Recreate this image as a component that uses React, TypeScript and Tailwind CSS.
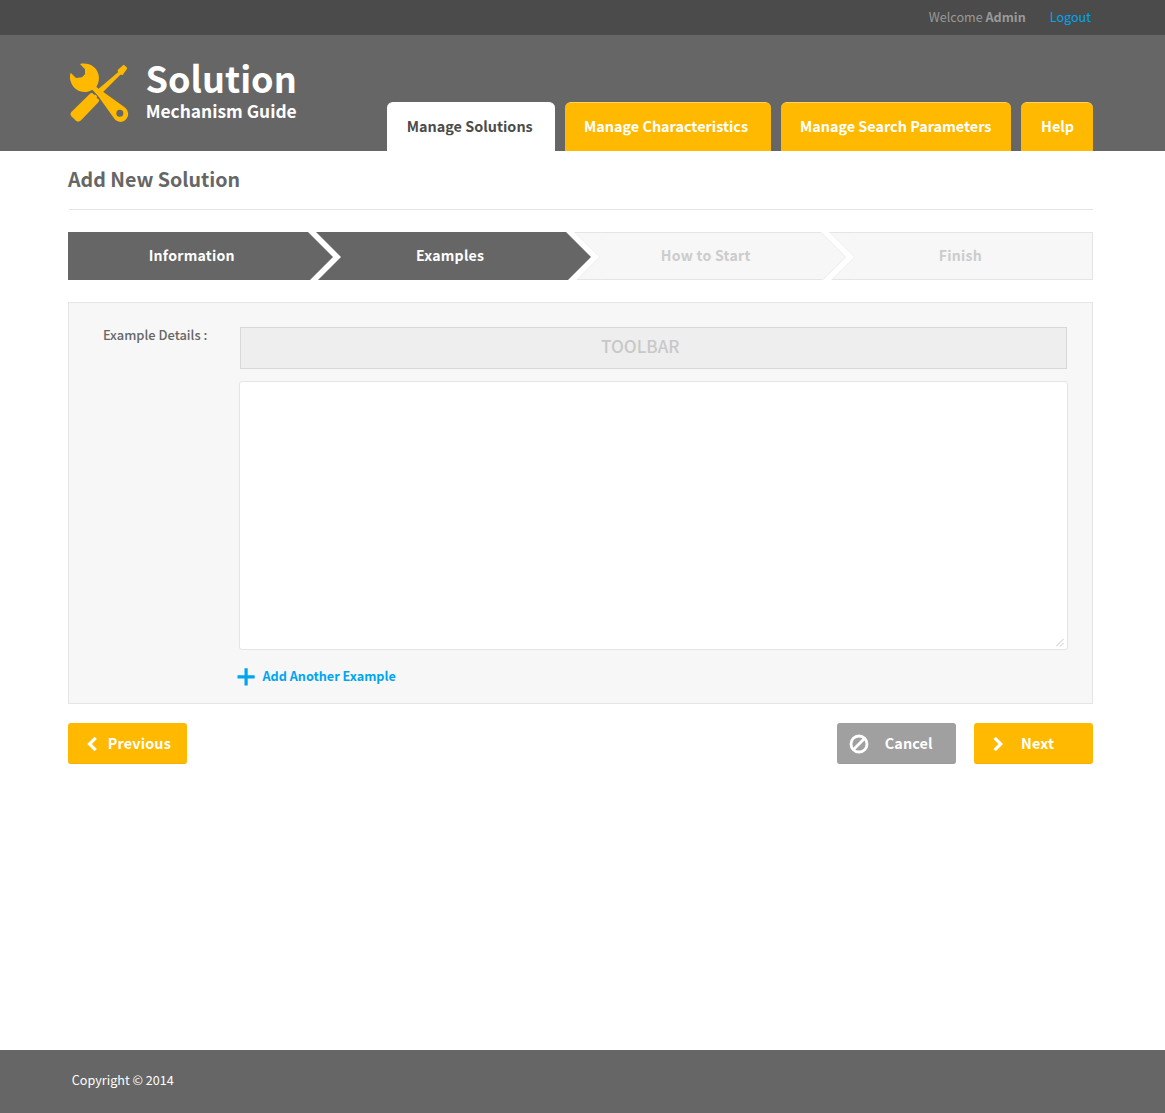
import React from "react";

function LogoMark() {
  return (
    <svg viewBox="30 24 177 180" className="block h-[60px] w-[59px] shrink-0" fill="#ffb900" aria-hidden="true">
      {/* screwdriver handle */}
      <path d="M90 116 Q94 112 98 115 L102 119 L107 119 L111 124 L110 129 L116 133 Q119 137 115 142 L64 195 Q56 203 48 197 L34 184 Q29 178 34 171 Z" />
      {/* screwdriver shaft and tip */}
      <path d="M108 108 L174 52 L173 45 L190 30 Q193 29 195 32 L201 38 Q202 41 200 43 L188 60 L181 59 L118 122 Z" />
      {/* wrench with ring end */}
      <path
        fillRule="evenodd"
        d="M60 27 C86 21 111 35 116 61 C118 73 116 84 109 95 L119 104 Q122 107 127 109 L194 157 C206 166 208 183 198 193 C187 205 169 202 162 190 L117 127 Q113 121 104 112 L97 104 C72 119 42 108 33 82 C29 72 29 62 32 53 L48 69 L66 67 L75 58 L75 43 Z M190 175 A10.500 10.500 0 1 0 169 175 A10.500 10.500 0 1 0 190 175 Z"
      />
    </svg>
  );
}

type Tone = "dark" | "light";

/* Arrow-shaped divider between two wizard steps */
function Divider({ from, to }: { from: Tone; to: Tone }) {
  return (
    <svg viewBox="0 0 34 48" className="relative block h-12 w-[34px] shrink-0 overflow-visible" aria-hidden="true">
      {to === "dark" ? (
        <path d="M8 0 H34 V48 H10 L33 25 Z" fill="#666666" />
      ) : (
        <>
          <path d="M8.500 0.500 H34.500 V47.500 H11 L34 25 Z" fill="#f7f7f7" />
          <path d="M8.500 0.500 L33.600 25 L11 47.500" fill="none" stroke="#ececec" />
          <path d="M8 0.500 H34 M10.500 47.500 H34" fill="none" stroke="#e5e5e5" />
          {/* keeps the gap's point white where it meets the next step */}
          <path d="M4.500 0 L29.300 25 L6.500 48" fill="none" stroke="#ffffff" strokeWidth="5" />
        </>
      )}
      {from === "dark" ? (
        <path d="M0 0 L25 25 L2 48 H0 Z" fill="#666666" />
      ) : (
        <>
          <path d="M0 0.500 L25 25 L2.500 47.500 H0 Z" fill="#f7f7f7" />
          <path d="M0 0.500 L24.600 25 L2 47.500 H0" fill="none" stroke="#ececec" />
        </>
      )}
    </svg>
  );
}

function Tab({ label, className }: { label: string; className: string }) {
  return (
    <a
      className={
        "block h-[49px] rounded-t-[6px] border-t pt-[11px] text-[14.400px] leading-6 font-bold whitespace-nowrap " +
        className
      }
    >
      {label}
    </a>
  );
}

export default function App() {
  return (
    <div className="flex h-[1113px] w-[1165px] flex-col bg-white font-['Noto_Sans_CJK_SC',sans-serif] text-[#666666]">
      <div className="flex h-[35px] shrink-0 justify-end bg-[#4b4b4b] pr-[74px] text-[12.600px] leading-[34px] text-[#999999]">
        <span>
          Welcome <b className="font-bold">Admin</b>
        </span>
        <a className="ml-6 text-[#00a5f0]">Logout</a>
      </div>

      <header className="flex h-[116px] shrink-0 justify-between bg-[#666666] pr-[72px] pl-[70px]">
        <div className="flex pt-7">
          <LogoMark />
          <div className="ml-4 font-bold whitespace-nowrap text-white">
            <div className="pl-[0.500px] text-[36.100px] leading-[28px]">Solution</div>
            <div className="mt-2 pl-[0.700px] text-[17.350px] leading-6">Mechanism Guide</div>
          </div>
        </div>
        <nav className="flex items-end gap-2.5">
          <Tab label="Manage Solutions" className="w-[168px] border-white bg-white pl-[19.800px] text-[#4b4b4b]" />
          <Tab label="Manage Characteristics" className="w-[206px] border-[#ffd35c] bg-[#ffb900] pl-[19px] text-white" />
          <Tab label="Manage Search Parameters" className="w-[230px] border-[#ffd35c] bg-[#ffb900] pl-[18.900px] text-white" />
          <Tab label="Help" className="w-[72px] border-[#ffd35c] bg-[#ffb900] pl-[20px] text-white" />
        </nav>
      </header>

      <main className="flex-1 pr-[72px] pl-[68px]">
        <h1 className="ml-px h-[59px] border-b border-[#e5e5e5] pt-[12px] text-[19.650px] leading-8 font-bold">
          <span className="-ml-px">Add New Solution</span>
        </h1>

        <div className="mt-[22px] flex h-12 text-[14.100px] leading-[46px] font-bold tracking-[0.250px] whitespace-nowrap">
          <div className="w-60 bg-[#666666] pl-[80.700px] text-white">Information</div>
          <Divider from="dark" to="dark" />
          <div className="w-56 bg-[#666666] pl-[73.900px] text-white">Examples</div>
          <Divider from="dark" to="light" />
          <div className="w-[221px] border-y border-[#e5e5e5] bg-[#f7f7f7] pl-[60.800px] leading-[44px] text-[#cccccc]">
            How to Start
          </div>
          <Divider from="light" to="light" />
          <div className="flex-1 border-y border-r border-[#e5e5e5] bg-[#f7f7f7] pl-[83.700px] leading-[44px] text-[#cccccc]">
            Finish
          </div>
        </div>

        <section className="mt-[22px] flex h-[402px] border border-[#e5e5e5] bg-[#f7f7f7]">
          <label className="w-[170px] shrink-0 pt-5 pl-[33.900px] text-[12.900px] leading-6 font-medium">
            Example Details :
          </label>
          <div className="flex w-[829px] flex-col pt-6">
            <div className="mx-px h-[42px] border border-[#d8d8d8] bg-[#eeeeee] pl-[360px] text-[17.100px] leading-[36px] font-medium text-[#c8c8c8]">
              TOOLBAR
            </div>
            <div className="mt-3 flex h-[269px] items-end justify-end rounded-[3px] border border-[#e5e5e5] bg-white pr-[3px] pb-[2px]">
              <svg viewBox="0 0 8 8" className="h-2 w-2" fill="none" stroke="#b5b5b5" strokeWidth="0.800" aria-hidden="true">
                <path d="M0 7.500 L7.500 0 M4 7.500 L7.500 4" />
              </svg>
            </div>
            <a className="mt-[14px] -ml-[2px] flex items-center text-[12.640px] leading-6 font-bold text-[#00a5f0]">
              <svg viewBox="0 0 18 18" className="mt-px h-[18px] w-[18px]" fill="#00a5f0" aria-hidden="true">
                <path d="M7.500 0.300 H10.700 V7.300 H17.700 V10.500 H10.700 V17.500 H7.500 V10.500 H0.500 V7.300 H7.500 Z" />
              </svg>
              <span className="ml-[7.500px]">Add Another Example</span>
            </a>
          </div>
        </section>

        <div className="mt-[19px] flex h-[41px] text-[14.400px] leading-10 font-bold tracking-[0.150px] text-white">
          <button className="flex w-[119px] items-center rounded-[3px] border-b border-[#f5ad00] bg-[#ffb900] pl-[19px]">
            <svg viewBox="0 0 10 14" className="mt-px h-3.5 w-2.5" fill="none" stroke="white" strokeWidth="3.200" aria-hidden="true">
              <path d="M8.700 0.900 L2.500 7 L8.700 13.100" />
            </svg>
            <span className="ml-[10.800px]">Previous</span>
          </button>
          <button className="ml-auto flex w-[119px] items-center rounded-[3px] border-b border-[#999999] bg-[#a0a0a0] pl-3">
            <svg viewBox="0 0 20 20" className="mt-px h-5 w-5" fill="none" stroke="white" strokeWidth="2.800" aria-hidden="true">
              <circle cx="10" cy="10" r="8" />
              <path d="M4.500 15.500 L15.500 4.500" />
            </svg>
            <span className="ml-[15.700px]">Cancel</span>
          </button>
          <button className="ml-[18px] flex w-[119px] items-center rounded-[3px] border-b border-[#f5ad00] bg-[#ffb900] pl-[19px]">
            <svg viewBox="0 0 10 14" className="mt-px h-3.5 w-2.5" fill="none" stroke="white" strokeWidth="3.200" aria-hidden="true">
              <path d="M1.600 0.900 L7.800 7 L1.600 13.100" />
            </svg>
            <span className="ml-[18px]">Next</span>
          </button>
        </div>
      </main>

      <footer className="h-[63px] shrink-0 bg-[#666666] pl-[71.800px] text-[12.600px] leading-[59px] text-white">
        Copyright © 2014
      </footer>
    </div>
  );
}
